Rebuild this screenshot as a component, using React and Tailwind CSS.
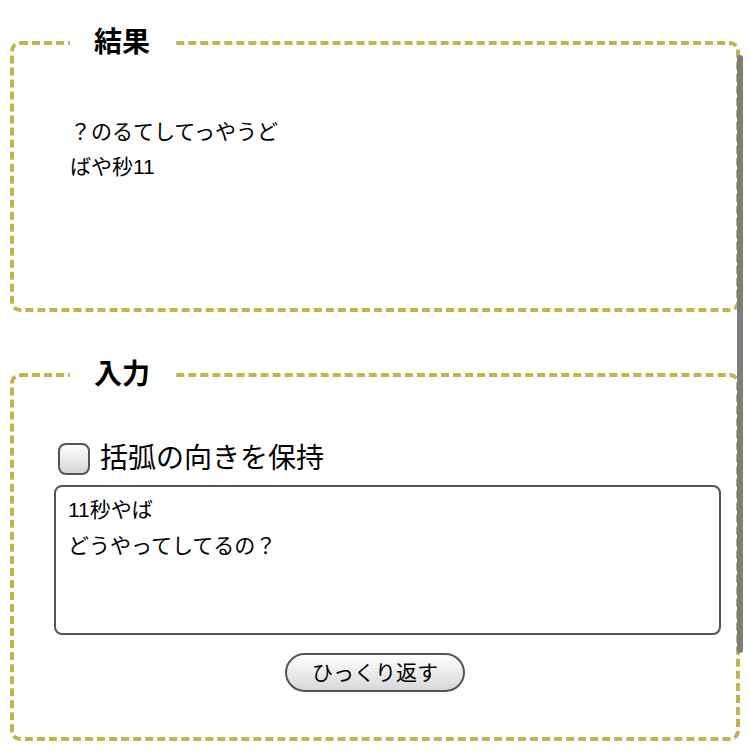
import { useState } from "react";

const font = { fontFamily: '"Liberation Sans", "Noto Sans CJK JP", sans-serif' };

export default function App() {
  const [keep, setKeep] = useState(false);
  const [text, setText] = useState("11秒やば\nどうやってしてるの？");

  return (
    <div style={font} className="relative bg-white text-black px-[10px] pt-[26px] pb-[10px]">
      <fieldset className="border-[4px] border-dashed border-[#c3b44c] rounded-[10px] h-[286px] m-0 p-0">
        <legend className="ml-[56px] px-[24px] text-[28px] font-bold leading-[34px]">結果</legend>
        <div className="pl-[56px] pt-[54px]">
          <p className="text-[21px] leading-[35px]">？のるてしてっやうど</p>
          <p className="text-[21px] leading-[35px]">ばや秒11</p>
        </div>
      </fieldset>

      <fieldset className="mt-[46px] border-[4px] border-dashed border-[#c3b44c] rounded-[10px] h-[383px] m-0 p-0">
        <legend className="ml-[56px] px-[24px] text-[28px] font-bold leading-[34px]">入力</legend>
        <label className="flex items-center gap-[10px] ml-[44px] mt-[51px] cursor-pointer">
          <input
            type="checkbox"
            checked={keep}
            onChange={(e) => setKeep(e.target.checked)}
            className="appearance-none w-[32px] h-[32px] rounded-[8px] border-2 border-[#555] bg-gradient-to-b from-white to-[#d4d4d4] checked:to-[#9a9a9a]"
          />
          <span className="text-[28px] leading-[32px]">括弧の向きを保持</span>
        </label>
        <textarea
          value={text}
          onChange={(e) => setText(e.target.value)}
          className="block mt-[10px] ml-[40px] w-[667px] h-[150px] border-2 border-[#555] rounded-[8px] px-[12px] py-[5px] text-[21px] leading-[36px] resize-none outline-none"
        />
        <div className="flex justify-center mt-[18px]">
          <button className="w-[180px] h-[39px] rounded-full border-2 border-[#555] bg-gradient-to-b from-white to-[#d8d8d8] text-[21px] leading-none">
            ひっくり返す
          </button>
        </div>
      </fieldset>

      {/* scroll indicator */}
      <div className="absolute left-[737px] top-[55px] w-[6px] h-[598px] rounded-full bg-[#7d7d80]" />
    </div>
  );
}
